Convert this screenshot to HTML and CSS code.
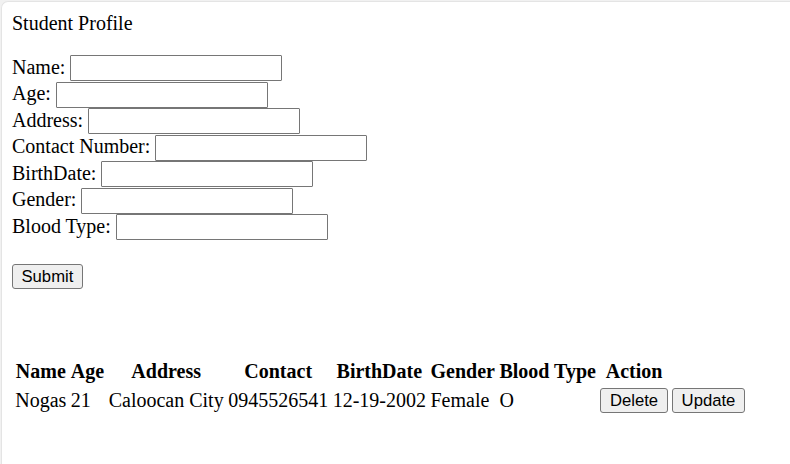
FILE: index.html
```html
<!DOCTYPE html>
<html>
<head>
<meta charset="utf-8">
<title>Student Profile</title>
<link rel="stylesheet" href="styles.css">
</head>
<body>
<div class="window">
  <div class="page">
    <div class="title">Student Profile</div>
    <form class="form">
      <div class="row"><label>Name:</label><input type="text" class="field"></div>
      <div class="row"><label>Age:</label><input type="text" class="field"></div>
      <div class="row"><label>Address:</label><input type="text" class="field"></div>
      <div class="row"><label>Contact Number:</label><input type="text" class="field"></div>
      <div class="row"><label>BirthDate:</label><input type="text" class="field"></div>
      <div class="row"><label>Gender:</label><input type="text" class="field"></div>
      <div class="row"><label>Blood Type:</label><input type="text" class="field"></div>
      <div class="actions"><button type="button" class="btn">Submit</button></div>
    </form>
    <table class="records">
      <thead>
        <tr>
          <th>Name</th><th>Age</th><th>Address</th><th>Contact</th><th>BirthDate</th><th>Gender</th><th>Blood Type</th><th>Action</th>
        </tr>
      </thead>
      <tbody>
        <tr>
          <td>Nogas</td><td>21</td><td>Caloocan City</td><td>0945526541</td><td>12-19-2002</td><td>Female</td><td>O</td>
          <td><button type="button" class="btn">Delete</button></td>
          <td><button type="button" class="btn">Update</button></td>
        </tr>
      </tbody>
    </table>
  </div>
</div>
</body>
</html>
```
FILE: styles.css
```css
html, body {
  margin: 0;
  padding: 0;
  height: 100%;
  background: #f1f1f1;
}

.window {
  box-sizing: border-box;
  margin: 1px 0 0 1px;
  height: calc(100% - 1px);
  background: #ffffff;
  border-top: 1px solid #e4e4e4;
  border-left: 1px solid #e4e4e4;
  border-top-left-radius: 7px;
}

.page {
  padding: 10px 10px 10px 10px;
  font-family: "Liberation Serif", "Times New Roman", serif;
  font-size: 20px;
  color: #000;
}

.title {
  line-height: 23px;
}

.form {
  margin: 20px 0 0 0;
  display: flex;
  flex-direction: column;
}

.row {
  height: 26.5px;
  display: flex;
  align-items: center;
  gap: 5px;
}

.row label {
  line-height: 23px;
  position: relative;
  top: -1px;
}

.field {
  box-sizing: border-box;
  width: 212px;
  height: 26px;
  margin: 0;
  padding: 1px 2px;
  border: 1px solid #767676;
  border-radius: 1px;
  background: #fff;
  font-family: "Liberation Sans", Arial, sans-serif;
  font-size: 16.67px;
}

.actions {
  margin-top: 23.5px;
  display: flex;
}

.btn {
  box-sizing: border-box;
  height: 25px;
  margin: 0;
  padding: 0 8.5px;
  border: 1px solid #767676;
  border-radius: 3px;
  background: #efefef;
  color: #000;
  font-family: "Liberation Sans", Arial, sans-serif;
  font-size: 16.67px;
  line-height: 21px;
}

.records {
  margin-top: 68px;
  border-collapse: separate;
  border-spacing: 2.5px;
  margin-left: 0;
}

.records th,
.records td {
  padding: 1.25px;
  line-height: 23px;
  white-space: nowrap;
}

.records th {
  font-weight: bold;
  text-align: center;
}

.records td {
  text-align: left;
}
```
